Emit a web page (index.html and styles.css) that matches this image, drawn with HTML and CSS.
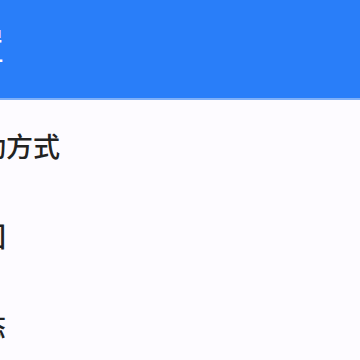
FILE: index.html
```html
<html>
<head>
    <title>Menu</title>
    <link rel="stylesheet" href="styles.css">
</head>
<body>
    <div class="page">
        <div class="header">
            <span class="title">设置</span>
        </div>
        <div class="list">
            <div class="item">启动方式</div>
            <div class="item">撤回</div>
            <div class="item">状态</div>
        </div>
    </div>
</body>
</html>
```
FILE: styles.css
```css
* {
    margin: 0px;
    padding: 0px;
    box-sizing: border-box;
}

body
{
    width: 360px;
    height: 360px;
    overflow: hidden;
    background-color: #fdfbff;
    font-family: "Noto Sans CJK SC", "Noto Sans", sans-serif;
}

.header
{
    height: 100px;
    background-color: #297ef9;
    border-bottom: 2px solid #7fb0f8;
    display: flex;
    align-items: center;
}

.title
{
    color: #ffffff;
    font-size: 36px;
    font-weight: 500;
    margin-left: -68px;
    margin-top: -10px;
}

.list
{
    display: flex;
    flex-direction: column;
}

.item
{
    height: 90px;
    display: flex;
    align-items: center;
    margin-left: -48px;
    font-size: 27px;
    font-weight: 500;
    color: #222222;
}
```
